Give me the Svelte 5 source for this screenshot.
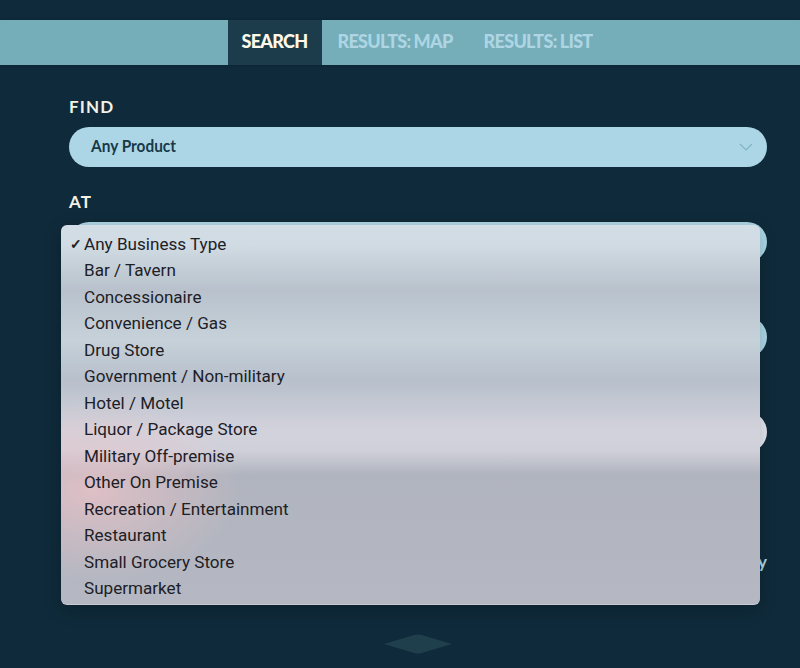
<script>
  const tabs = ["Search", "Results: Map", "Results: List"];
  const options = [
    "Any Business Type",
    "Bar / Tavern",
    "Concessionaire",
    "Convenience / Gas",
    "Drug Store",
    "Government / Non-military",
    "Hotel / Motel",
    "Liquor / Package Store",
    "Military Off-premise",
    "Other On Premise",
    "Recreation / Entertainment",
    "Restaurant",
    "Small Grocery Store",
    "Supermarket"
  ];
</script>

<div class="page">
  <nav class="tabs">
    {#each tabs as tab, i}
      <span class="tab" class:active={i === 0}>{tab}</span>
    {/each}
  </nav>

  <form class="form">
    <div class="field">
      <span class="label">Find</span>
      <div class="select">
        <span class="value">Any Product</span>
        <svg width="14" height="8" viewBox="0 0 14 8"><path d="M1 1l6 6 6-6" fill="none" stroke="#7fb4c4" stroke-width="1.2" /></svg>
      </div>
    </div>
    <div class="field">
      <span class="label">At</span>
      <div class="select"></div>
    </div>
    <div class="field">
      <span class="label"></span>
      <div class="select"></div>
    </div>
    <div class="field">
      <span class="label"></span>
      <div class="select white"></div>
    </div>
    <!-- only the tail of this line shows past the open menu -->
    <p class="note">y</p>
    <div class="submit">
      <svg width="70" height="20" viewBox="0 0 70 20"><path d="M1 10L31 1Q35 0 39 1L69 10L39 19Q35 20 31 19Z" fill="#1f3f4c" /></svg>
    </div>
  </form>

  <ul class="menu">
    {#each options as option, i}
      <li>
        <span class="check">{i === 0 ? "✓" : ""}</span>{option}
      </li>
    {/each}
  </ul>
</div>

<style>
  :global(body) {
    background: #0f2a3a;
  }
  .page {
    position: relative;
    height: 668px;
    overflow: hidden;
    padding-top: 20px;
    box-sizing: border-box;
    font-family: Lato, "Liberation Sans", sans-serif;
  }
  .tabs {
    display: flex;
    height: 45px;
    padding-left: 228px;
    background: #75adb9;
    box-shadow: 0 0 2px #08202c;
  }
  .tab {
    display: flex;
    align-items: center;
    padding: 0 15.5px 3px;
    font-size: 18px;
    font-weight: 900;
    letter-spacing: -0.7px;
    word-spacing: -0.5px;
    text-transform: uppercase;
    color: #add5e3;
  }
  .tab.active {
    padding: 0 14.5px 3px 13.5px;
    background: #1c3c4b;
    color: #fdf8e8;
  }
  .form {
    display: flex;
    flex-direction: column;
    padding: 32px 33px 0 69px;
  }
  .field {
    display: flex;
    flex-direction: column;
    gap: 10px;
    height: 95px;
  }
  .label {
    height: 20px;
    line-height: 20px;
    font-size: 17px;
    font-weight: 700;
    letter-spacing: 1.2px;
    text-transform: uppercase;
    color: #f4f1e6;
  }
  .select {
    display: flex;
    align-items: center;
    justify-content: space-between;
    flex: none;
    height: 40px;
    padding: 0 14px 0 22px;
    border-radius: 20px;
    background: #acd6e5;
    font-size: 17.5px;
    font-weight: 700;
    color: #17394a;
  }
  .value {
    transform: translateY(-2px) scaleX(0.88);
    transform-origin: left center;
  }
  .select.white {
    background: #e3e5ee;
  }
  .note {
    margin: 74px 0 0;
    text-align: right;
    font-size: 17px;
    font-weight: 700;
    color: #acd6e5;
  }
  .submit {
    display: flex;
    justify-content: center;
    margin-top: 62px;
  }
  .menu {
    position: absolute;
    left: 61px;
    top: 225px;
    width: 699px;
    height: 380px;
    box-sizing: border-box;
    margin: 0;
    padding: 5.5px 0 0;
    list-style: none;
    border-radius: 6px;
    background:
      radial-gradient(ellipse 150px 90px at 30px 265px, rgba(238, 195, 200, 0.75), rgba(238, 195, 200, 0)),
      linear-gradient(180deg, #d2dde5 0, #d0dbe3 20px, #b9c2cc 65px, #c6d1da 115px, #b8c0cb 155px, #d2d2dc 205px, #d0d0da 225px, #b0b4be 250px, #b5b8c2 100%);
    box-shadow: 0 4px 18px rgba(0, 0, 0, 0.2), inset 0 -1px 0 rgba(255, 255, 255, 0.25);
    font-family: Roboto, "Liberation Sans", sans-serif;
    font-size: 17.1px;
    color: #1d2026;
  }
  li {
    display: flex;
    align-items: center;
    height: 26.5px;
    white-space: nowrap;
  }
  .check {
    flex: none;
    width: 23px;
    padding-left: 9px;
    box-sizing: border-box;
    font-size: 14px;
    font-weight: 700;
  }
</style>
